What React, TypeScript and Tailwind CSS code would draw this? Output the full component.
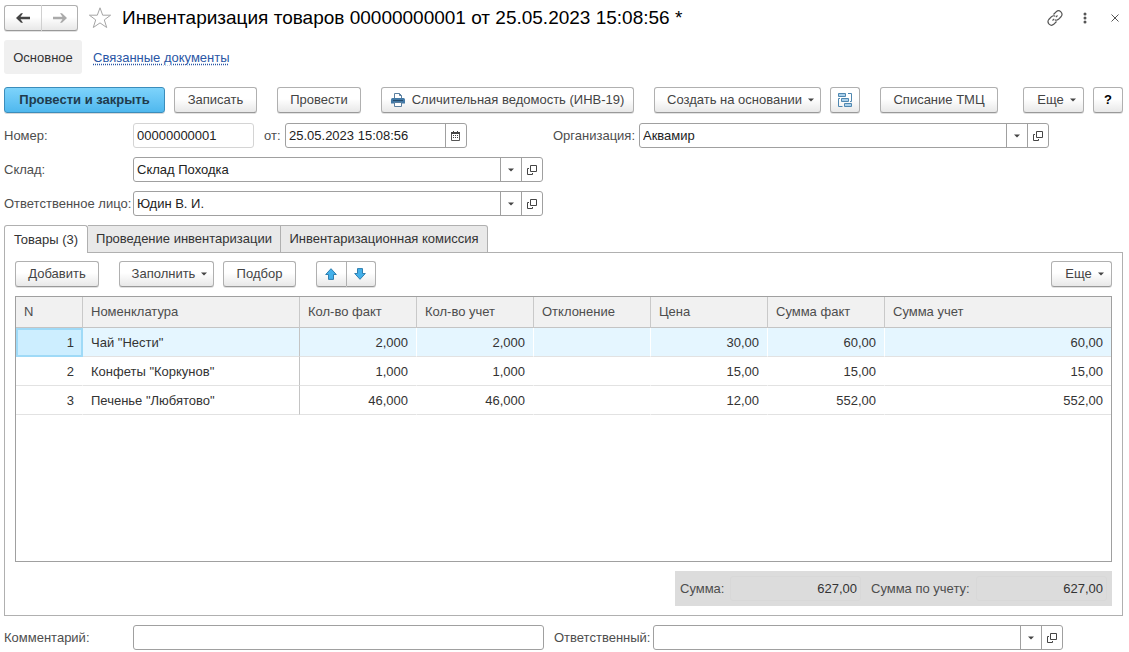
import React from "react";

const BTN =
  "flex h-[26px] shrink-0 items-center justify-center rounded-[3px] border border-[#b0b0b0] border-b-[#999] bg-linear-to-b from-white from-45% to-[#e8e8e8] text-[#444] whitespace-nowrap shadow-[0_1px_0_#e2e2e2]";
const FIELD = "flex h-[25px] overflow-hidden rounded-[3px] border border-[#a0a0a0] bg-white";
const INPUT = "h-full w-full min-w-0 flex-1 bg-transparent px-[3px] text-[#222] outline-none";
const SIDE = "flex w-[21px] shrink-0 items-center justify-center border-l border-[#a0a0a0]";
const LABEL = "shrink-0 whitespace-nowrap text-[#4d4d4d]";

function Caret() {
  return (
    <svg width="6" height="4" viewBox="0 0 6 4" aria-hidden="true">
      <path d="M0 0.5h6L3 3.5z" fill="#444" />
    </svg>
  );
}

function OpenIcon() {
  return (
    <svg width="10" height="10" viewBox="0 0 10 10" fill="none" stroke="#444" aria-hidden="true">
      <path d="M3.5 0.5h6v6h-6z" />
      <path d="M2 3.5H0.5v6h5V8" />
    </svg>
  );
}

function CalendarIcon() {
  return (
    <svg width="10" height="10" viewBox="0 0 10 10" aria-hidden="true">
      <path d="M0.5 1.5h8v8h-8z" fill="#fff" stroke="#555" />
      <path d="M0 1h9v2H0zM2 0h1v2H2zM6 0h1v2H6z" fill="#444" />
      <path d="M2 4h1v1H2zM4 4h1v1H4zM6 4h1v1H6zM2 6h1v1H2zM4 6h1v1H4zM6 6h1v1H6z" fill="#444" />
    </svg>
  );
}

function PrinterIcon() {
  return (
    <svg width="14" height="14" viewBox="0 0 14 14" aria-hidden="true">
      <path d="M3.5 6V0.5h5L10.5 2.5V6" fill="#fff" stroke="#5b7f9f" />
      <path d="M8.5 0.5V2.5h2" fill="none" stroke="#5b7f9f" />
      <path d="M1.5 5h11Q14 5 14 6.500V10.500H0V6.500Q0 5 1.500 5z" fill="#4379a6" />
      <path d="M2 7h10v1H2z" fill="#234b6c" />
      <path d="M3.500 9.500h7v4h-7z" fill="#fff" stroke="#5b7f9f" />
    </svg>
  );
}

function StructureIcon() {
  return (
    <svg width="15" height="15" viewBox="0 0 15 15" fill="none" stroke="#4f87b0" aria-hidden="true">
      <path d="M0.500 0.500h7v3h-7zM3.500 5.500h7v3h-7zM6.500 10.500h7v3h-7z" fill="#a9cfea" />
      <path d="M10 0.500h3.500v8h-1.500M2 5.500H0.500v8h4" />
    </svg>
  );
}

function ArrowIcon({ down = false }: { down?: boolean }) {
  return (
    <svg width="12" height="12" viewBox="0 0 12 12" className={down ? "rotate-180" : ""} aria-hidden="true">
      <path d="M6 0.700L11.300 6.500H8.500V11.400H3.500V6.500H0.700z" fill="#43b0ea" stroke="#2f7fb0" />
    </svg>
  );
}

function NavArrow({ color, flip = false }: { color: string; flip?: boolean }) {
  return (
    <svg width="14" height="10" viewBox="0 0 14 10" className={flip ? "rotate-180" : ""} aria-hidden="true">
      <path d="M0 5L5 0.300H7L4.500 3.700H14V6.300H4.500L7 9.700H5z" fill={color} />
    </svg>
  );
}

function PickField({ id, value, className }: { id: string; value: string; className: string }) {
  return (
    <div className={`${FIELD} ${className}`}>
      <input id={id} className={INPUT} defaultValue={value} />
      <button type="button" aria-label="Выбрать" className={SIDE}><Caret /></button>
      <button type="button" aria-label="Открыть" className={SIDE}><OpenIcon /></button>
    </div>
  );
}

const COLUMNS = ["N", "Номенклатура", "Кол-во факт", "Кол-во учет", "Отклонение", "Цена", "Сумма факт", "Сумма учет"];

const ROWS = [
  ["1", 'Чай "Нести"', "2,000", "2,000", "", "30,00", "60,00", "60,00"],
  ["2", 'Конфеты "Коркунов"', "1,000", "1,000", "", "15,00", "15,00", "15,00"],
  ["3", 'Печенье "Любятово"', "46,000", "46,000", "", "12,00", "552,00", "552,00"],
];

function cellClass(row: number, col: number) {
  const align = col === 1 ? "text-left" : "text-right";
  const edge =
    col === 7
      ? ""
      : col === 1
        ? "border-r border-r-[#c4c4c4]"
        : row === 0
          ? "border-r border-r-white"
          : "border-r border-r-transparent";
  const fill =
    row === 0 ? (col === 0 ? "bg-[#cdeeff] outline-2 -outline-offset-2 outline-[#9fdaf7]" : "bg-[#e5f6ff]") : "";
  return `h-[29px] border-b border-b-[#e2e2e2] px-2 pt-0.5 ${align} ${edge} ${fill}`;
}

function GoodsTable() {
  return (
    <div className="mt-[9px] h-[266px] border border-[#a0a0a0]">
      <table className="w-full table-fixed border-separate border-spacing-0">
        <colgroup>
          <col className="w-[67px]" />
          <col className="w-[217px]" />
          <col className="w-[117px]" />
          <col className="w-[117px]" />
          <col className="w-[117px]" />
          <col className="w-[117px]" />
          <col className="w-[117px]" />
          <col />
        </colgroup>
        <thead>
          <tr>
            {COLUMNS.map((name, i) => (
              <th
                key={name}
                className={`h-[31px] border-b border-b-[#c4c4c4] bg-[#f1f1f1] px-2 text-left font-normal text-[#4d4d4d] ${i < 7 ? "border-r border-r-[#c9c9c9]" : ""}`}
              >
                {name}
              </th>
            ))}
          </tr>
        </thead>
        <tbody>
          {ROWS.map((cells, r) => (
            <tr key={cells[0]}>
              {cells.map((text, c) => (
                <td key={c} className={cellClass(r, c)}>{text}</td>
              ))}
            </tr>
          ))}
        </tbody>
      </table>
    </div>
  );
}

export default function App() {
  return (
    <main className="bg-white pt-1 pr-[6px] pb-[2px] pl-1 font-['Liberation_Sans',Arial,sans-serif] text-[13px] leading-4 text-[#333]">
      <header className="flex h-[27px] items-center">
        <div className="flex">
          <button type="button" aria-label="Назад" className={`${BTN} w-[38px] rounded-r-none border-r-[#d0d0d0]`}><NavArrow color="#444" /></button>
          <button type="button" aria-label="Вперед" className={`${BTN} w-[36px] rounded-l-none border-l-0`}><NavArrow color="#aaa" flip /></button>
        </div>
        <button type="button" aria-label="В избранное" className="ml-[10px]">
          <svg width="24" height="24" viewBox="0 0 24 24" fill="none" stroke="#a5a5a5" aria-hidden="true">
            <path d="M12 1.800L14.700 9.200H22.600L16.300 13.900L18.700 21.500L12 16.900L5.300 21.500L7.700 13.900L1.400 9.200H9.300z" />
          </svg>
        </button>
        <h1 className="ml-[10px] text-[19px] leading-6 text-black">Инвентаризация товаров 00000000001 от 25.05.2023 15:08:56 *</h1>
        <div className="mr-1 ml-auto flex items-center">
          <button type="button" aria-label="Ссылка">
            <svg width="16" height="16" viewBox="0 0 16 16" fill="none" stroke="#555" strokeWidth="1.200" aria-hidden="true">
              <path d="M6.500 4.500L9.300 1.700Q11.500 -0.300 13.900 1.900Q16 4.200 14.200 6.500L11.500 9.300Q9.700 10.800 7.900 9.900M9.500 11.500L6.700 14.300Q4.500 16.300 2.100 14.100Q0 11.800 1.800 9.500L4.500 6.700Q6.300 5.200 8.100 6.100M5.500 10.500L7.200 8.800M8.800 7.200L10.500 5.500" />
            </svg>
          </button>
          <button type="button" aria-label="Меню" className="ml-5">
            <svg width="4" height="12" viewBox="0 0 4 12" fill="#555" aria-hidden="true">
              <circle cx="2" cy="2" r="1.500" /><circle cx="2" cy="6" r="1.500" /><circle cx="2" cy="10" r="1.500" />
            </svg>
          </button>
          <button type="button" aria-label="Закрыть" className="ml-6">
            <svg width="8" height="8" viewBox="0 0 8 8" stroke="#555" aria-hidden="true">
              <path d="M0.500 0.500l7 7M7.500 0.500l-7 7" />
            </svg>
          </button>
        </div>
      </header>

      <nav className="mt-[9px] flex items-center gap-[11px]">
        <a href="#main" className="flex h-[34px] w-[78px] items-center justify-center rounded-[3px] bg-[#f0f0f0] pt-0.5">Основное</a>
        <a href="#related" className="pt-0.5 text-[#2a56a5] underline decoration-dotted underline-offset-2">Связанные документы</a>
      </nav>

      <div className="mt-[13px] flex">
        <button type="button" className="flex h-[26px] w-[161px] shrink-0 items-center justify-center rounded-[3px] border border-[#3b8dbb] bg-linear-to-b from-[#7dd3fb] to-[#4fb8ee] font-bold text-[#1f3b4d] shadow-[0_1px_0_#d8d8d8]">Провести и закрыть</button>
        <button type="button" className={`${BTN} ml-[9px] w-[83px]`}>Записать</button>
        <button type="button" className={`${BTN} ml-5 w-[84px]`}>Провести</button>
        <button type="button" className={`${BTN} ml-5 w-[253px] gap-[7px]`}><PrinterIcon />Сличительная ведомость (ИНВ-19)</button>
        <button type="button" className={`${BTN} ml-5 w-[167px] gap-1.5 pl-1.5`}>Создать на основании<Caret /></button>
        <button type="button" aria-label="Структура подчиненности" className={`${BTN} ml-[9px] w-[30px]`}><StructureIcon /></button>
        <button type="button" className={`${BTN} ml-5 w-[118px]`}>Списание ТМЦ</button>
        <button type="button" className={`${BTN} ml-auto w-[61px] gap-1.5 pl-1.5`}>Еще<Caret /></button>
        <button type="button" className={`${BTN} ml-[9px] w-[30px] font-bold text-black`}>?</button>
      </div>

      <div className="mt-[10px] flex items-center">
        <label htmlFor="number" className={`${LABEL} w-[129px]`}>Номер:</label>
        <div className="flex h-[25px] w-[121px] rounded-[3px] border border-[#d4d4d4]">
          <input id="number" className={INPUT} defaultValue="00000000001" />
        </div>
        <label htmlFor="date" className={`${LABEL} ml-[10px] w-[21px]`}>от:</label>
        <div className={`${FIELD} w-[182px]`}>
          <input id="date" className={INPUT} defaultValue="25.05.2023 15:08:56" />
          <button type="button" aria-label="Календарь" className={SIDE}><CalendarIcon /></button>
        </div>
        <label htmlFor="org" className={`${LABEL} ml-[86px] w-[86px]`}>Организация:</label>
        <PickField id="org" value="Аквамир" className="w-[410px]" />
      </div>
      <div className="mt-[9px] flex items-center">
        <label htmlFor="store" className={`${LABEL} w-[129px]`}>Склад:</label>
        <PickField id="store" value="Склад Походка" className="w-[410px]" />
      </div>
      <div className="mt-[9px] flex items-center">
        <label htmlFor="person" className={`${LABEL} w-[129px]`}>Ответственное лицо:</label>
        <PickField id="person" value="Юдин В. И." className="w-[410px]" />
      </div>

      <div role="tablist" className="relative z-10 mt-[9px] -mb-px flex">
        <button type="button" role="tab" aria-selected="true" className="h-7 w-[84px] rounded-t-[3px] border border-b-0 border-[#b0b0b0] bg-white">Товары (3)</button>
        <button type="button" role="tab" aria-selected="false" className="h-7 w-[193px] border border-l-0 border-[#b0b0b0] bg-[#e9e9e9]">Проведение инвентаризации</button>
        <button type="button" role="tab" aria-selected="false" className="h-7 w-[207px] rounded-tr-[3px] border border-l-0 border-[#b0b0b0] bg-[#e9e9e9]">Инвентаризационная комиссия</button>
      </div>
      <section className="border border-[#b0b0b0] px-[10px] pt-2 pb-[9px]">
        <div className="flex">
          <button type="button" className={`${BTN} w-[84px]`}>Добавить</button>
          <button type="button" className={`${BTN} ml-5 w-[95px] gap-1.5 pl-1.5`}>Заполнить<Caret /></button>
          <button type="button" className={`${BTN} ml-[9px] w-[73px]`}>Подбор</button>
          <button type="button" aria-label="Переместить вверх" className={`${BTN} ml-5 w-[31px] rounded-r-none pr-0.5`}><ArrowIcon /></button>
          <button type="button" aria-label="Переместить вниз" className={`${BTN} w-[29px] rounded-l-none border-l-0 pr-0.5`}><ArrowIcon down /></button>
          <button type="button" className={`${BTN} ml-auto w-[61px] gap-1.5 pl-1.5`}>Еще<Caret /></button>
        </div>
        <GoodsTable />
        <div className="mt-[9px] ml-auto flex h-[35px] w-[437px] items-center bg-[#dcdcdc] px-[5px]">
          <label htmlFor="sum" className={`${LABEL} w-[50px]`}>Сумма:</label>
          <input id="sum" readOnly defaultValue="627,00" className="h-[25px] w-[131px] rounded-[3px] border border-[#d8d8d8] bg-transparent px-[3px] text-right text-[#333]" />
          <label htmlFor="accounted" className={`${LABEL} ml-[10px] w-[105px]`}>Сумма по учету:</label>
          <input id="accounted" readOnly defaultValue="627,00" className="h-[25px] w-[131px] rounded-[3px] border border-[#d8d8d8] bg-transparent px-[3px] text-right text-[#333]" />
        </div>
      </section>

      <div className="mt-[9px] flex items-center">
        <label htmlFor="comment" className={`${LABEL} w-[129px]`}>Комментарий:</label>
        <div className={`${FIELD} w-[411px]`}><input id="comment" className={INPUT} /></div>
        <label htmlFor="responsible" className={`${LABEL} ml-[10px] w-[99px]`}>Ответственный:</label>
        <PickField id="responsible" value="" className="w-[410px]" />
      </div>
    </main>
  );
}
